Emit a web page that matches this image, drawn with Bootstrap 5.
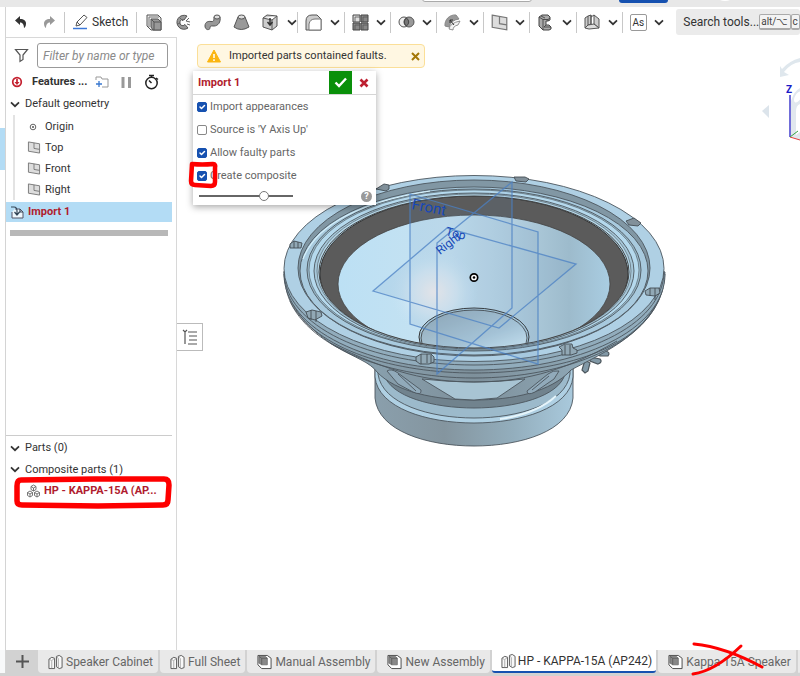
<!DOCTYPE html>
<html lang="en">
<head>
<meta charset="utf-8">
<meta name="viewport" content="width=device-width, initial-scale=1">
<title>HP - KAPPA-15A (AP242)</title>
<link href="https://cdn.jsdelivr.net/npm/bootstrap@5.3.0/dist/css/bootstrap.min.css" rel="stylesheet">
<style>
body{font-family:Roboto,"Liberation Sans",sans-serif;font-size:12px;line-height:16px;color:#333;background:#fff}
button{font:inherit;color:inherit;background:none;border:0;padding:0}
svg{display:block;flex:none}
.app-top{height:7px;background:#e8e8e8;overflow:hidden}
.top-search{width:110px;height:10px;background:#fff;border:1px solid #aaa;border-radius:3px;margin:-8px 0 0 422px}
.top-share{width:49px;height:10px;background:#1651b0;border-radius:3px;margin:-7px 0 0 87px}
.top-user{width:14px;height:6px;background:#fff;border-radius:50%;margin:-5px 0 0 50px}
.edge{width:6px;border-right:1px solid #d4d4d4;padding-top:121px}
.edge-mark{height:42px;background:#b3dcf5}
.toolbar{height:30px}
.tool-sep{width:1px;height:21px;background:#c8c8c8}
.tool-groups{flex:0 0 371px}
.tool-group{border-left:1px solid #c8c8c8;height:21px;padding-left:7px;padding-right:4px}
.tool-search{width:124px;height:26px;background:#ebebeb;border-radius:3px;margin-left:8px;padding-left:7px}
.keycap{font-family:inherit;font-size:10px;line-height:13px;border:1px solid #aaa;border-bottom-width:2px;border-radius:2px;padding:0 1px;background:#f3f3f3;color:#444}
.as-box{width:17px;height:17px;border:1px solid #999;border-radius:2px;font-size:10px;line-height:15px}
.side{width:171px;border-right:1px solid #d8d8d8;border-top:1px solid #d8d8d8;font-size:11px}
.filter-row{padding-top:5px}
.filter-box{height:25px;border:1px solid #999;border-radius:3px;padding:0 5px;min-width:0;font-size:12px;font-style:italic}
.filter-box::placeholder{color:#8a8a8a}
.features{margin-top:3px}
.row-22{height:22px}
.row-21{height:21px}
.tree-gap{gap:5px}
.tree{margin-left:7px;padding-top:1px;margin-bottom:2px;border-left:2px solid #e3e3e3;padding-left:12px}
.picked{height:20px;background:#b3dcf5;margin-right:4px}
.bar-end{height:6px;background:#b8b8b8;margin:8px 8px 0 4px}
.red-text{color:#b01c2e;font-weight:700}
.parts{border-top:1px solid #ccc;margin-right:4px;padding-top:1px;padding-bottom:149px}
.part-mark{left:8px;top:40px}
.toast-bar{left:20px;top:7px;width:228px;height:24px;background:#fff7e2;border:1px solid #fbdf98;border-radius:4px;padding:0 4px 0 9px;font-size:11px}
.panel{left:16px;top:34px;width:183px;background:#fff;box-shadow:0 2px 7px rgba(0,0,0,.35);color:#666;font-size:11px}
.panel-head{height:23px;border-bottom:1px solid #d5d5d5;box-sizing:content-box;padding-left:5px}
.ok-btn{width:23px;height:23px;background:#0a900a}
.no-btn{width:24px;height:23px}
.opts{padding:1px 4px 0}
.opts .form-check-input{width:10px;height:10px;margin:0 3px 0 0;border-radius:2px;border:1px solid #888;float:none}
.opts .form-check-input:checked{background-color:#1651b0;border-color:#1651b0;background-size:10px}
.opt{height:22px}
.opt + .opt{margin-top:1px}
.fade-range{appearance:none;width:94px;height:12px;background:linear-gradient(#666,#666) center/100% 2px no-repeat;margin-left:2px}
.fade-range::-webkit-slider-thumb{appearance:none;width:10px;height:10px;border:1px solid #777;border-radius:50%;background:#fff}
.foot{height:18px}
.help{width:11px;height:11px;border-radius:50%;background:#999;color:#fff;font-size:9px;line-height:11px;font-weight:700}
.check-mark{left:11px;top:123px}
.list-btn{left:0;top:286px;width:26px;height:28px;border:1px solid #bbb;border-left:0;background:#fff}
.tabs-bar{height:26px;background:#d2d2d2;gap:2px;padding-bottom:3px;overflow:hidden;color:#666}
.tabs-bar .add{width:28px}
.tab-item{background:#e9e9e9;border-radius:0 0 4px 4px;padding:0 5px 0 10px;color:#666;text-decoration:none;white-space:nowrap;gap:3px}
.tab-on{background:#fff;color:#333;border-bottom:2px solid #1651b0;border-radius:0 0 3px 3px;padding-left:9px;padding-right:4px;gap:2px}
.cross{left:690px;bottom:0}
</style>
<script src="https://cdn.jsdelivr.net/npm/bootstrap@5.3.0/dist/js/bootstrap.bundle.min.js"></script>
</head>
<body>
<svg width="0" height="0" class="position-absolute" aria-hidden="true">
<defs>
<symbol id="chev" viewBox="0 0 10 7"><path d="M1 1.3 5 5.2 9 1.3" fill="none" stroke="#333" stroke-width="1.7"/></symbol>
<symbol id="plane" viewBox="0 0 14 14"><path d="M1 1 13 3V13L1 11Z" fill="#ddd" stroke="#777"/><path d="M7 2V8L13 9" fill="none" stroke="#777"/></symbol>
<symbol id="studio" viewBox="0 0 16 16"><path d="M1 5 4 3 7 4V15H1Z" fill="#f8f8f8" stroke="#555"/><path d="M1 5 4 6.500 7 4M4 7V15" fill="none" stroke="#888" stroke-width=".7"/><path d="M9 2 12 1 15 3V14L12 15 9 13Z" fill="#f8f8f8" stroke="#555"/><path d="M9 2 11 4.500V14" fill="none" stroke="#888" stroke-width=".7"/></symbol>
<symbol id="asm" viewBox="0 0 16 16"><path d="M1 1H11L15 4V15H5L1 11Z" fill="#fff" stroke="#444"/><path d="M2 2H9L11 4V11H5L2 9Z" fill="#888" stroke="#666" stroke-width=".8"/><path d="M2 2 5 4H11M5 4V11" fill="none" stroke="#555" stroke-width=".8"/></symbol>
</defs>
</svg>
<div class="d-flex flex-column vh-100 position-relative overflow-hidden">
<header class="app-top d-flex"><div class="top-search"></div><div class="top-share"></div><div class="top-user"></div></header>
<div class="d-flex flex-grow-1">
<div class="edge flex-shrink-0"><div class="edge-mark"></div></div>
<div class="d-flex flex-column flex-grow-1">
<nav class="toolbar d-flex align-items-center" aria-label="Tools">
<button class="ms-2" aria-label="Undo"><svg width="13" height="14"><path d="M1 5.500 6 1V4C10 4 12 6 12 8.500 12 11 11 12.500 10 13 10 10 9 7.500 6 7.500V10Z" fill="#333"/></svg></button>
<button class="ms-3" aria-label="Redo"><svg width="13" height="14"><path d="M12 5.500 7 1V4C3 4 1 6 1 8.500 1 11 2 12.500 3 13 3 10 4 7.500 7 7.500V10Z" fill="#999"/></svg></button>
<span class="tool-sep ms-2 me-2"></span>
<button class="d-flex align-items-center gap-1"><svg width="15" height="16"><path d="M3 12 4 8 11 1 14 3.500 7 11ZM4 8 7 11" fill="#fff" stroke="#555"/><path d="M0 14.500H14" stroke="#3c78d8" stroke-width="1.500"/></svg><span>Sketch</span></button>
<span class="tool-sep ms-2 me-2"></span>
<div class="d-flex align-items-center flex-grow-1">
<button aria-label="Extrude"><svg width="18" height="17" viewBox="-1 0 18 17"><path d="M1 1H12L15 4V16H5L1 12Z" fill="#eee" stroke="#555"/><path d="M3 13V3H13" fill="none" stroke="#777"/><path d="M5 5H12L15 8V16H7L5 13Z" fill="#999" stroke="#555"/><path d="M5 5 8 8H15M8 8V16" fill="none" stroke="#555"/></svg></button>
<button class="ms-2 ps-1" aria-label="Revolve"><svg width="17" height="17"><path d="M12 2A7 7 0 1 0 13 14L10 10.500A3 3 0 1 1 9 6Z" fill="#999" stroke="#555"/><path d="M4 3 8 7M2 10 6 9M14 4 11 7 15 8M15 11 12 10" stroke="#666" fill="none"/></svg></button>
<button class="ms-2 ps-1" aria-label="Sweep"><svg width="17" height="17"><path d="M1 12C1 8 4 7 7 7.500 10 8 10 6 10 3H16C17 8 14 12 10 12 7 12 6 11.500 6 14.500 4 17 1 15 1 12Z" fill="#999" stroke="#555"/><ellipse cx="13" cy="3" rx="3" ry="2" fill="#ddd" stroke="#555"/></svg></button>
<button class="ms-2 ps-1" aria-label="Loft"><svg width="17" height="17"><path d="M5 3 1 13Q8 18 16 13L12 3Z" fill="#999" stroke="#555"/><ellipse cx="8.500" cy="3" rx="3.500" ry="2" fill="#ddd" stroke="#555"/></svg></button>
<button class="ms-2 ps-1" aria-label="Thicken"><svg width="17" height="17"><path d="M1 4 5 1 15 2V12L10 16 1 13ZM1 4 10 6 15 2M10 6V16" fill="#ccc" stroke="#555"/><path d="M8 4V10M5.500 8 8 11 10.500 8" fill="none" stroke="#333" stroke-width="1.500"/></svg></button>
<button class="ms-2" aria-label="More solid tools"><svg width="10" height="7"><use href="#chev"/></svg></button>
</div>
<div class="tool-groups d-flex">
<div class="tool-group d-flex flex-fill align-items-center justify-content-between"><button aria-label="Fillet"><svg width="17" height="17"><path d="M1 16V7Q1 1 7 1H12L16 5V16Z" fill="#ccc" stroke="#555"/><path d="M4 16V10Q5 5 10 5H16V16Z" fill="#fff" stroke="#777"/></svg></button><button aria-label="More fillets"><svg width="10" height="7"><use href="#chev"/></svg></button></div>
<div class="tool-group d-flex flex-fill align-items-center justify-content-between"><button aria-label="Pattern"><svg width="17" height="17"><path d="M1 1H8V8H1Z" fill="#ddd" stroke="#444"/><path d="M9 1H16V8H9ZM1 9H8V16H1ZM9 9H16V16H9Z" fill="#888" stroke="#444"/><path d="M3 3H8M3 3V8M11 3H16M11 3V8M3 11H8M3 11V16M11 11H16M11 11V16" stroke="#555" stroke-width=".8" fill="none"/></svg></button><button aria-label="More patterns"><svg width="10" height="7"><use href="#chev"/></svg></button></div>
<div class="tool-group d-flex flex-fill align-items-center justify-content-between"><button aria-label="Boolean"><svg width="17" height="17"><circle cx="6" cy="8" r="5" fill="#eee" stroke="#555"/><circle cx="11" cy="8" r="5" fill="#999" stroke="#555"/><path d="M8.500 4Q4 8 8.500 12Q13 8 8.500 4Z" fill="#777" stroke="#444"/></svg></button><button aria-label="More booleans"><svg width="10" height="7"><use href="#chev"/></svg></button></div>
<div class="tool-group d-flex flex-fill align-items-center justify-content-between"><button aria-label="Move face"><svg width="17" height="17"><path d="M1 12A10 10 0 0 1 12 1L15 5Q7 6 5 13Z" fill="#999" stroke="#888"/><path d="M5 15Q6 9 16 7L14 11Q9 12 9 16Z" fill="#f4f4f4" stroke="#777" stroke-width=".8"/><path d="M10 11 6 6M6 9V6L9 6" fill="none" stroke="#333"/></svg></button><button aria-label="More face tools"><svg width="10" height="7"><use href="#chev"/></svg></button></div>
<div class="tool-group d-flex flex-fill align-items-center justify-content-between"><button aria-label="Plane"><svg width="17" height="17"><use href="#plane"/></svg></button><button aria-label="More planes"><svg width="10" height="7"><use href="#chev"/></svg></button></div>
<div class="tool-group d-flex flex-fill align-items-center justify-content-between"><button aria-label="Frame"><svg width="17" height="17"><path d="M2 3 5 1H11L13 3V6L11 7H9V11H12L14 13V15L12 16H6L2 12Z" fill="#aaa" stroke="#444"/><path d="M2 3 6 5.500H11L13 4M6 5.500V16M11 5.500V7M9 11 7 13H12L14 13M4 2 8 4" fill="none" stroke="#444" stroke-width=".9"/></svg></button><button aria-label="More frame tools"><svg width="10" height="7"><use href="#chev"/></svg></button></div>
<div class="tool-group d-flex flex-fill align-items-center justify-content-between"><button aria-label="Sheet metal"><svg width="17" height="17"><path d="M1 4 4 2V11L1 14ZM4 2 7 1V10L4 11M10 1 15 5V14L10 10Z" fill="#ccc" stroke="#555"/><path d="M1 14 5 15 15 14 10 10 4 11Z" fill="#ddd" stroke="#555"/><path d="M7 1V10M10 1 7 3" fill="none" stroke="#555"/></svg></button><button aria-label="More sheet metal"><svg width="10" height="7"><use href="#chev"/></svg></button></div>
<div class="tool-group d-flex flex-fill align-items-center justify-content-between"><button class="as-box">As</button><button aria-label="More custom features"><svg width="10" height="7"><use href="#chev"/></svg></button></div>
</div>
<button class="tool-search d-flex align-items-center flex-shrink-0"><span class="text-nowrap">Search tools...</span><kbd class="keycap text-nowrap">alt/⌥</kbd><kbd class="keycap">c</kbd></button>
</nav>
<div class="d-flex flex-grow-1">
<aside class="side d-flex flex-column flex-shrink-0">
<div class="filter-row d-flex align-items-center gap-2 ps-2 pe-1"><svg width="15" height="15"><path d="M1.500 1.500H13.500L9 7V11.500L6 13.500V7Z" fill="none" stroke="#555" stroke-width="1.200"/></svg><input class="filter-box flex-fill me-1" type="text" aria-label="Filter" placeholder="Filter by name or type"></div>
<div class="features d-flex align-items-center ps-1 row-22"><svg width="14" height="12"><circle cx="7" cy="6" r="4.300" fill="none" stroke="#c4202f" stroke-width="1.700"/><path d="M7 3V7" stroke="#c4202f" stroke-width="1.700"/><path d="M4.500 6H9.500L7 9Z" fill="#c4202f"/></svg>
<strong class="ms-2 text-nowrap">Features ...</strong>
<button class="ms-2" aria-label="Add folder"><svg width="14" height="14"><path d="M1 5V2H6L7 4H13V12H7" fill="none" stroke="#999"/><path d="M4 6V12M1 9H7" stroke="#3978d0" stroke-width="1.300"/></svg></button>
<button class="ms-2 ps-1" aria-label="Pause"><svg width="11" height="13"><path d="M2 1V12M8.500 1V12" stroke="#999" stroke-width="3"/></svg></button>
<button class="ms-2 ps-1" aria-label="Timer"><svg width="15" height="16"><circle cx="7.500" cy="9" r="5.700" fill="none" stroke="#222" stroke-width="1.500"/><path d="M5 1.500H10M7.500 1V4M7.500 9 5 6.500M12 4 14 5.500" stroke="#222" stroke-width="1.500"/></svg></button></div>
<button class="tree-gap d-flex align-items-center row-22 ps-1"><svg width="10" height="7"><use href="#chev"/></svg><span>Default geometry</span></button>
<div class="tree">
<div class="d-flex align-items-center row-21"><svg width="14" height="12"><circle cx="6" cy="6" r="2.800" fill="none" stroke="#666"/><circle cx="6" cy="6" r="1" fill="#555"/></svg><span class="ms-1">Origin</span></div>
<div class="d-flex align-items-center row-21"><svg width="14" height="13"><use href="#plane"/></svg><span class="ms-1">Top</span></div>
<div class="d-flex align-items-center row-21"><svg width="14" height="13"><use href="#plane"/></svg><span class="ms-1">Front</span></div>
<div class="d-flex align-items-center row-21"><svg width="14" height="13"><use href="#plane"/></svg><span class="ms-1">Right</span></div>
</div>
<div class="picked d-flex align-items-center ps-1"><svg width="14" height="15"><path d="M5 4H10L13 7V13H2V7" fill="#eef7fc" stroke="#556"/><path d="M10 4V7H13M1 2H4Q7 2 7 6V9M4.500 7 7 10 9.500 7" fill="none" stroke="#345" stroke-width="1.200"/></svg><span class="red-text ms-1">Import 1</span></div>
<div class="bar-end"></div>
<section class="parts mt-auto position-relative">
<button class="tree-gap d-flex align-items-center row-22 ps-1"><svg width="10" height="7"><use href="#chev"/></svg><span>Parts (0)</span></button>
<button class="tree-gap d-flex align-items-center row-21 ps-1"><svg width="10" height="7"><use href="#chev"/></svg><span>Composite parts (1)</span></button>
<div class="d-flex align-items-center row-21 ps-3 ms-1"><svg width="14" height="14"><path d="M7.500 1 10 2.500V5.500L7.500 7 5 5.500V2.500ZM5 2.500 7.500 4 10 2.500M7.500 4V7M4 7 6.500 8.500V11.500L4 13 1.500 11.500V8.500ZM1.500 8.500 4 10 6.500 8.500M4 10V13M11 7 13.500 8.500V11.500L11 13 8.500 11.500V8.500ZM8.500 8.500 11 10 13.500 8.500M11 10V13" fill="none" stroke="#666" stroke-width=".9"/></svg><span class="red-text text-nowrap ms-1">HP - KAPPA-15A (AP...</span></div>
<svg class="part-mark position-absolute" width="160" height="34"><path d="M7 4Q3 4 3 10L3 25Q3 29 8 29L84 30 149 29Q154 29 154 24L155 9Q155 3 150 3L80 3Z" fill="none" stroke="#fe0000" stroke-width="5.500" stroke-linejoin="round"/></svg>
</section>
</aside>
<main class="flex-grow-1 position-relative overflow-hidden">
<svg class="w-100 h-100 position-absolute" viewBox="177 37 623 613" preserveAspectRatio="xMinYMin meet" role="img" aria-label="Speaker model">
<defs>
<linearGradient id="gc" x1="0" x2="1"><stop offset="0" stop-color="#bce0f4"/><stop offset=".4" stop-color="#c6e2f1"/><stop offset=".6" stop-color="#b7d3e3"/><stop offset=".85" stop-color="#9dbbcc"/><stop offset="1" stop-color="#a9cde2"/></linearGradient>
<radialGradient id="gh"><stop offset="0" stop-color="#f3eeee"/><stop offset=".5" stop-color="#dcebf4" stop-opacity=".8"/><stop offset="1" stop-color="#c5e3f4" stop-opacity="0"/></radialGradient>
<linearGradient id="gb" x1="0" x2="1"><stop offset="0" stop-color="#8a9fac"/><stop offset=".35" stop-color="#84959f"/><stop offset=".7" stop-color="#93aebd"/><stop offset="1" stop-color="#a9c9dc"/></linearGradient>
<linearGradient id="gf" x1="0" x2="1"><stop offset="0" stop-color="#91adbd"/><stop offset=".5" stop-color="#7e909b"/><stop offset="1" stop-color="#9ab9ca"/></linearGradient>
<linearGradient id="gd" x1="0" y1="0" x2=".7" y2="1"><stop offset="0" stop-color="#8fa6b4"/><stop offset=".6" stop-color="#acc9da"/><stop offset="1" stop-color="#d8f1fb"/></linearGradient>
<clipPath id="open"><ellipse cx="474" cy="272" rx="155" ry="76"/></clipPath>
</defs>
<g stroke="#4c565d" stroke-width=".9">
<path d="M375 365V398C378 431 427 446 474 446S570 431 573 398V365Z" fill="url(#gb)"/>
<path d="M375 377C378 408 427 423 474 423S570 408 573 377V360H375Z" fill="#afd0e3"/>
<path d="M378 374C382 404 430 418 474 418S566 404 570 374V355H378Z" fill="#9cbacb"/>
<path d="M384 374C390 397 434 408 474 408S559 397 565 374V350H384Z" fill="#71838e"/>
<path d="M500 419Q536 414 556 396" fill="none" stroke="#e6f5fb" stroke-width="2"/>
<path d="M585 360 590 363 588 371 585 373 582 370ZM590 357 600 359Q603 362 598 364L590 361ZM595 352 605 351Q611 352 608 356L600 356ZM574 366 602 350" fill="#8299a7" stroke-width="1.200"/>
<path d="M284 272C285 301 302 325 335 346C355 358 370 362 377 372C396 392 435 400 474 400S551 392 571 370C600 354 664 329 665 272Z" fill="url(#gf)"/>
<path d="M422 379Q474 385 525 379L497 398 474 400 455 399Z" fill="#a8c4d3"/>
<path d="M387 371Q391 368 398 373L421 390Q422 396 413 392L398 384ZM398 374 416 391M559 371Q553 370 548 374L527 391Q527 396 535 392L554 379ZM549 376 532 390" fill="#91aaba"/>
<path d="M286 288C296 342 381 378 474 378S650 343 663 288M290 301C315 351 397 373 474 373S635 353 658 300M330 343C390 373 430 382 474 382S560 374 617 341" fill="none" stroke-width=".9"/>
<path d="M284 274C284 330 369 370 474 370S665 330 665 274Z" fill="#91acbc"/>
<path d="M284 271C284 326 369 365 474 365S664 326 664 271" fill="none"/>
<ellipse cx="474" cy="268.500" rx="190" ry="93" fill="#afd0e4"/>
<ellipse cx="474" cy="268" rx="176" ry="88" fill="#8197a4"/>
<ellipse cx="474" cy="271" rx="174" ry="84" fill="#a8cade"/>
<ellipse cx="474" cy="270" rx="167" ry="81" fill="#99b9ca"/>
<ellipse cx="474" cy="270" rx="165" ry="80" fill="#b5d9ed" stroke-width=".6"/>
<ellipse cx="474" cy="271" rx="160" ry="78" fill="#a6c7d9"/>
<ellipse cx="474" cy="271" rx="157" ry="77" fill="#b5d7e9" stroke-width=".6"/>
<path d="M303 259Q323 208 430 191" fill="none" stroke="#d8f2fc" stroke-width="1.200"/>
</g>
<g clip-path="url(#open)">
<ellipse cx="474" cy="274" rx="154" ry="78" fill="#5b5b5b" stroke="#333"/>
<ellipse cx="474" cy="284" rx="136" ry="69" fill="url(#gc)" stroke="#444" stroke-width=".8"/>
<ellipse cx="434" cy="292" rx="44" ry="43" fill="url(#gh)"/>
<ellipse cx="474" cy="337" rx="55" ry="29" fill="#abcbdc" stroke="#333"/>
<ellipse cx="474" cy="338" rx="53" ry="28" fill="url(#gd)" stroke="#333" stroke-width=".8"/>
</g>
<ellipse cx="474" cy="272" rx="155" ry="76" fill="none" stroke="#444"/>
<g stroke="#444d53" stroke-width=".9">
<path d="M376 189 386 191 389 189V185L384 184Z" fill="#81909a"/>
<path d="M514 177 516 181 526 182 529 179 525 177Z" fill="#81909a"/>
<path d="M626 221 629 225 638 226 641 223 634 218Z" fill="#81909a"/>
<path d="M290 244V248L301 248 302 243 294 241ZM294 241V248M298 242V248" fill="#91a8b5"/>
<path d="M645 291 650 288H659L660 293 655 296 646 295ZM650 288V296M655 288V300" fill="#91a8b5"/>
<path d="M306 312 312 310 321 312 322 316 315 320 308 318ZM311 310V320M316 311V322" fill="#91a8b5"/>
<path d="M416 357 421 354H431L434 357V362L429 364H420L416 361ZM421 354V364M427 354V363M431 355V363" fill="#91a8b5"/>
<path d="M559 347 565 344H572L573 348 577 350V353L571 355H562V350ZM565 345V355M570 345V355" fill="#91a8b5"/>
</g>
<path d="M410 194 538 232V364L410 324ZM437 243 512 182V308L437 374ZM373 291 447 228 576 264 499 328Z" fill="#6a91bd" fill-opacity=".12" stroke="#4b80c4" stroke-opacity=".75" stroke-width="1.300"/>
<g font-family="Roboto,'Liberation Sans',sans-serif" fill="#1648b8">
<text x="411" y="209" font-size="15" transform="rotate(11 411 209)">Front</text>
<text x="440" y="255" font-size="12" transform="rotate(-38 440 255)">Right</text>
<text x="445" y="235" font-size="12" transform="rotate(14 445 235)">Top</text>
</g>
<circle cx="474" cy="277.500" r="3.700" fill="#fff" stroke="#000" stroke-width="1.700"/><circle cx="474" cy="277.500" r="1.300"/>
<path d="M784 72Q791 63 800 62V58Q789 61 782 69L780 66V77L789 75Z" fill="#dfe7ed"/>
<path d="M769 105V118L762 111Z" fill="#dce4eb"/>
<path d="M791 101Q794 91 800 88V140L791 137Z" fill="#e1e7ee"/><path d="M796 112Q796 105 800 104V132L796 135Z" fill="#fff"/><ellipse cx="798" cy="97" rx="3" ry="6" fill="#fff" transform="rotate(30 798 97)"/>
<path d="M790 95V137" stroke="#2420c5" stroke-width="1.300"/><path d="M790 137 800 140" stroke="#e23c3c"/><path d="M790 137 798 131" stroke="#36a244"/>
<text x="786" y="93" font-size="10" font-weight="700" fill="#1a1ac8" font-family="Roboto,sans-serif">Z</text>
</svg>
<div class="toast-bar position-absolute d-flex align-items-center" role="alert"><svg width="14" height="14"><path d="M7 1 13.500 13H.5Z" fill="#fbb510" stroke="#fbb510" stroke-linejoin="round"/><path d="M7 5V9M7 10.300V12" stroke="#fff" stroke-width="1.500"/></svg><span class="ms-2 text-nowrap">Imported parts contained faults.</span><button class="ms-auto" aria-label="Dismiss"><svg width="9" height="9"><path d="M1 1 8 8M8 1 1 8" stroke="#a47708" stroke-width="2"/></svg></button></div>
<form class="panel position-absolute">
<div class="panel-head d-flex align-items-center"><span class="red-text me-auto">Import 1</span><button type="button" class="ok-btn d-flex align-items-center justify-content-center" aria-label="Accept"><svg width="13" height="11"><path d="M1.500 5.500 5 9 12 1.500" fill="none" stroke="#fff" stroke-width="2.400"/></svg></button><button type="button" class="no-btn d-flex align-items-center justify-content-center" aria-label="Cancel"><svg width="10" height="10"><path d="M1.500 1.500 8.500 8.500M8.500 1.500 1.500 8.500" stroke="#bd2030" stroke-width="2.600"/></svg></button></div>
<div class="opts">
<div class="opt d-flex align-items-center"><input class="form-check-input" type="checkbox" id="o1" checked><label for="o1">Import appearances</label></div>
<div class="opt d-flex align-items-center"><input class="form-check-input" type="checkbox" id="o2"><label for="o2">Source is 'Y Axis Up'</label></div>
<div class="opt d-flex align-items-center"><input class="form-check-input" type="checkbox" id="o3" checked><label for="o3">Allow faulty parts</label></div>
<div class="opt d-flex align-items-center"><input class="form-check-input" type="checkbox" id="o4" checked><label for="o4">Create composite</label></div>
<div class="foot d-flex align-items-center justify-content-between"><input class="fade-range" type="range" min="0" max="100" value="72" aria-label="Fade"><button type="button" class="help" aria-label="Help">?</button></div>
</div>
</form>
<svg class="check-mark position-absolute" width="32" height="30"><path d="M4 4Q14 5 25 4Q28 4 27 8V22Q27 26 23 26L7 25Q3 25 3 21Z" fill="none" stroke="#fe0000" stroke-width="4.500" stroke-linejoin="round"/></svg>
<button class="list-btn position-absolute d-flex align-items-center justify-content-center" aria-label="Toggle list"><svg width="16" height="16"><path d="M6 3H15M7 7H15M7 11H15M6 15H15M1 1 3 3 5 1M3 3V15" fill="none" stroke="#555" stroke-width="1.200"/></svg></button>
</main>
</div>
</div>
</div>
<nav class="tabs-bar d-flex flex-shrink-0" aria-label="Documents">
<div class="edge bg-light p-0 flex-shrink-0"></div>
<button class="add flex-shrink-0 d-flex align-items-center justify-content-center" aria-label="Add tab"><svg width="13" height="13"><path d="M6.500 0V13M0 6.500H13" stroke="#555" stroke-width="2"/></svg></button>
<a href="#" class="tab-item d-flex align-items-center"><svg width="15" height="16"><use href="#studio"/></svg>Speaker Cabinet</a>
<a href="#" class="tab-item d-flex align-items-center"><svg width="15" height="16"><use href="#studio"/></svg>Full Sheet</a>
<a href="#" class="tab-item d-flex align-items-center"><svg width="15" height="16"><use href="#asm"/></svg>Manual Assembly</a>
<a href="#" class="tab-item d-flex align-items-center"><svg width="15" height="16"><use href="#asm"/></svg>New Assembly</a>
<a href="#" class="tab-item tab-on d-flex align-items-center" aria-current="page"><svg width="15" height="16"><use href="#studio"/></svg>HP - KAPPA-15A (AP242)</a>
<a href="#" class="tab-item d-flex align-items-center"><svg width="15" height="16"><use href="#asm"/></svg>Kappa 15A Speaker</a>
<a href="#" class="tab-item flex-fill p-0" aria-label="Next tab"></a>
</nav>
<svg class="cross position-absolute" width="80" height="36" aria-hidden="true"><path d="M4 4Q35 7 72 27" fill="none" stroke="#fe0000" stroke-width="3" stroke-linecap="round"/><path d="M3 34Q25 31 51 6" fill="none" stroke="#fe0000" stroke-width="3" stroke-linecap="round"/></svg>
</div>
</body>
</html>
